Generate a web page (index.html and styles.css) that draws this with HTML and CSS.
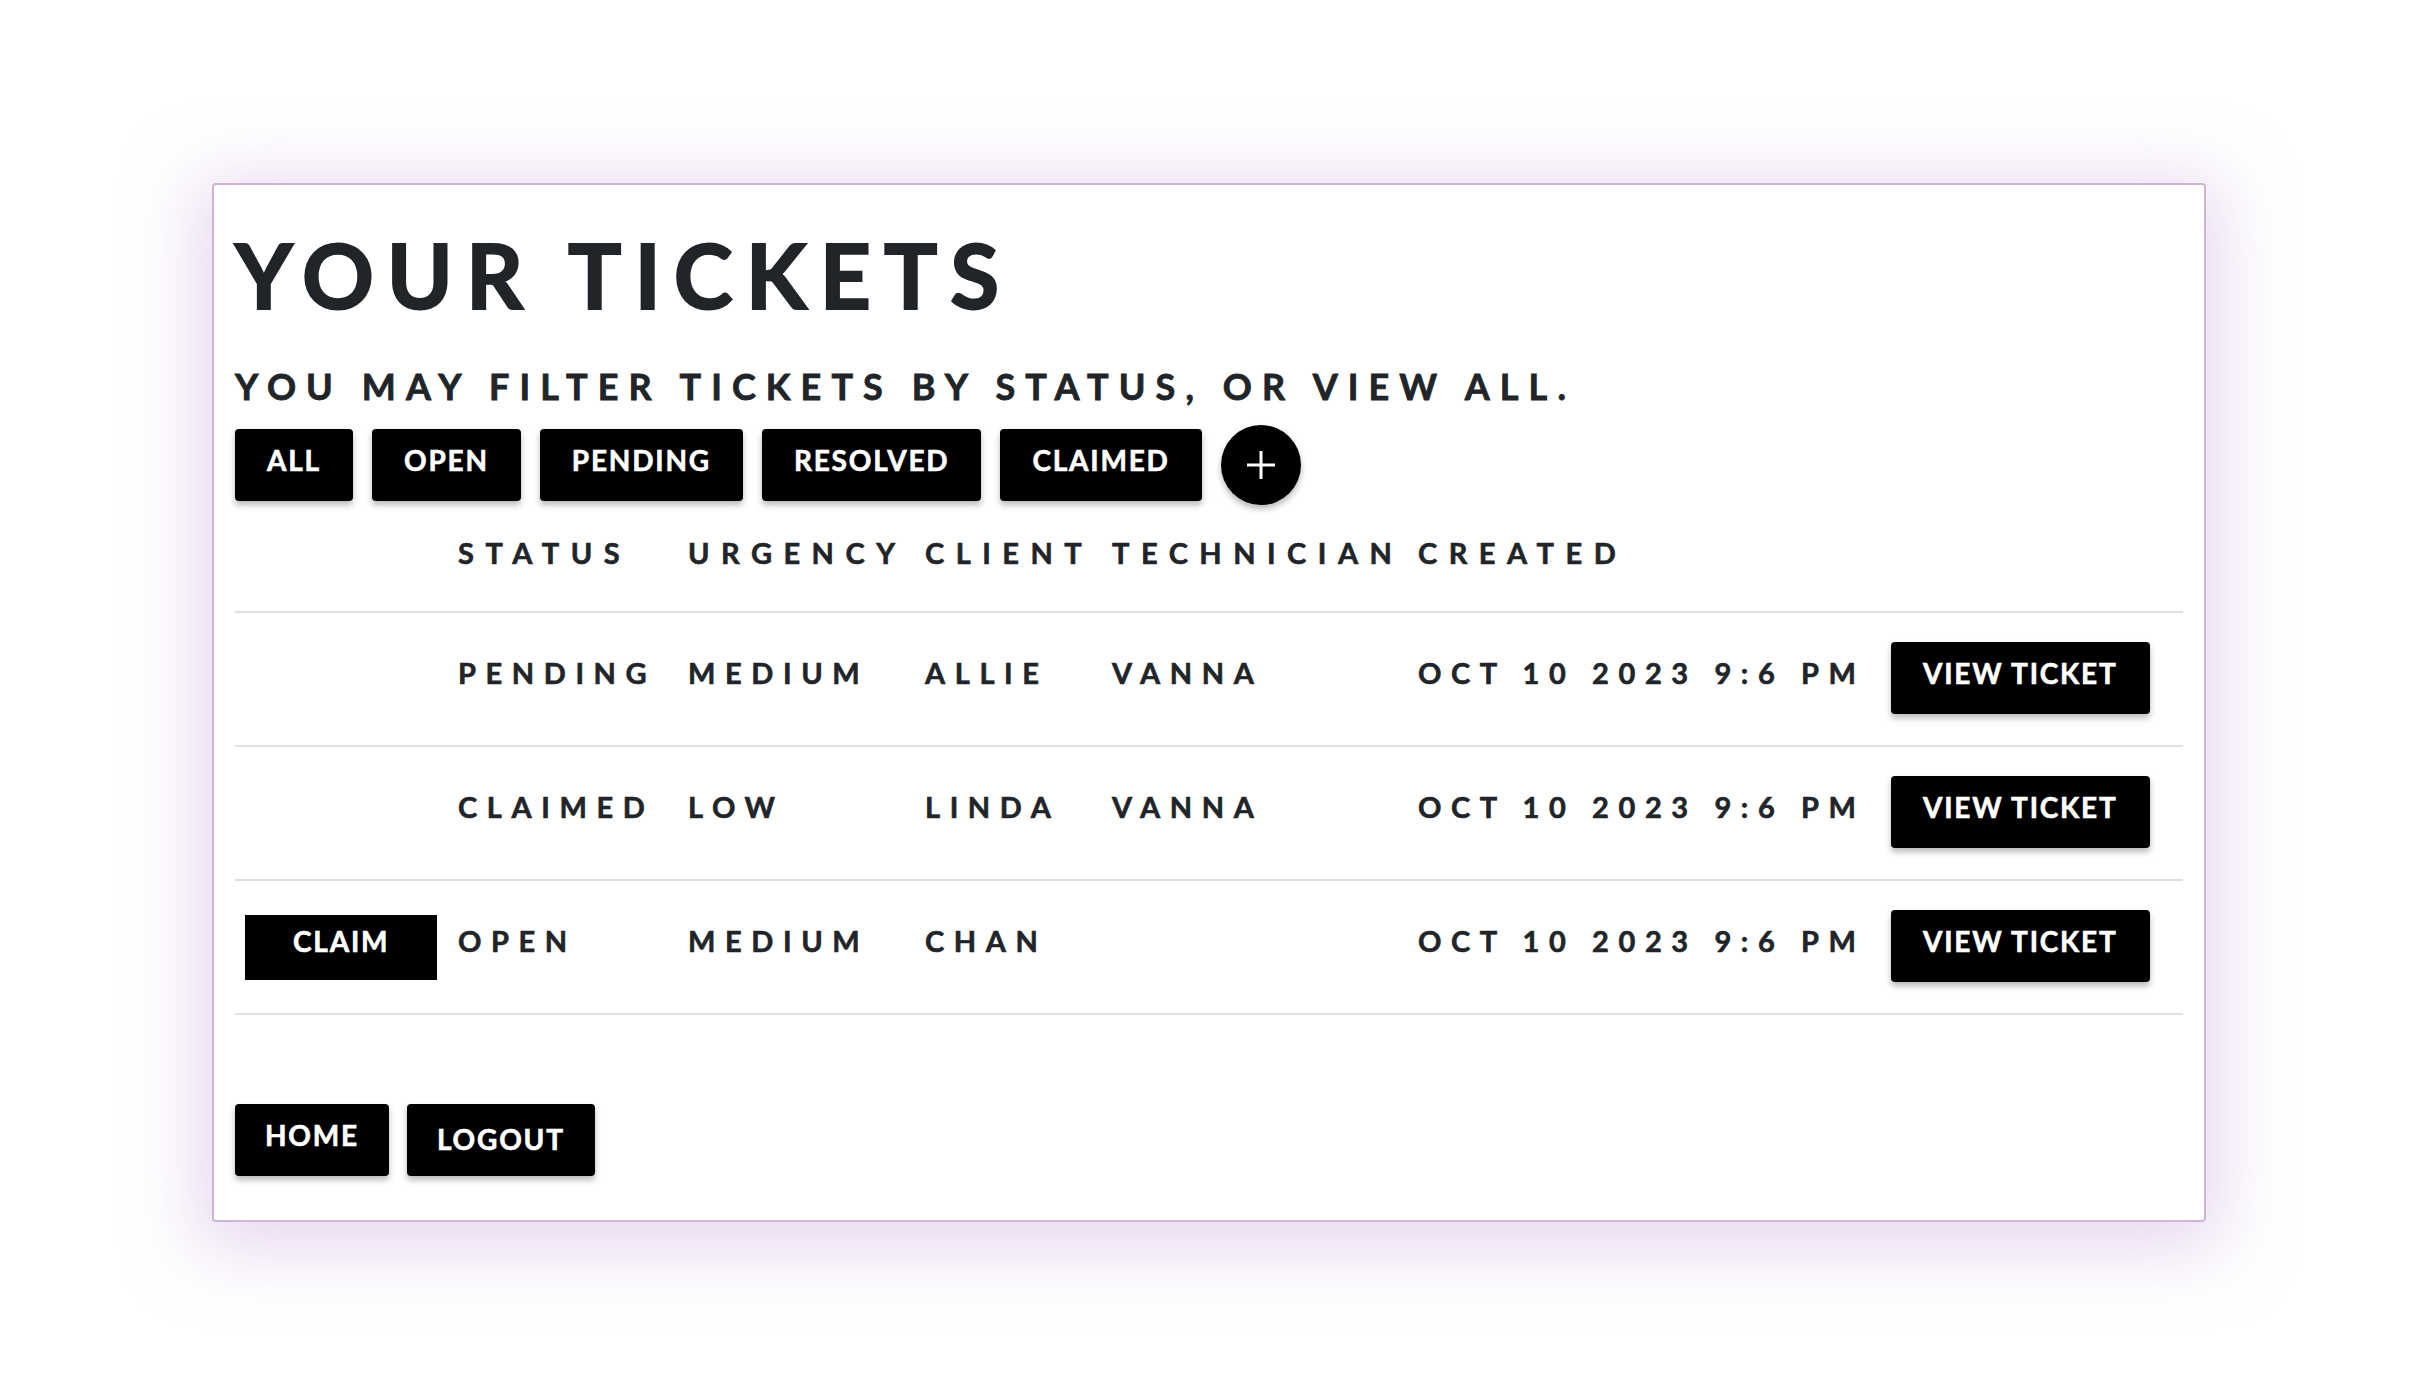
FILE: index.html
```html
<!DOCTYPE html>
<html lang="en">
<head>
<meta charset="utf-8">
<title>Your Tickets</title>
<link rel="stylesheet" href="styles.css">
</head>
<body>
<div class="card">
  <h1 class="title">YOUR TICKETS</h1>
  <h2 class="subtitle">YOU MAY FILTER TICKETS BY STATUS, OR VIEW ALL.</h2>
  <div class="filters">
    <button class="btn">ALL</button>
    <button class="btn">OPEN</button>
    <button class="btn">PENDING</button>
    <button class="btn">RESOLVED</button>
    <button class="btn">CLAIMED</button>
    <button class="btn-add" aria-label="New ticket">
      <svg width="30" height="30" viewBox="0 0 30 30"><path d="M15 1v28M1 15h28" stroke="#fff" stroke-width="3" fill="none"/></svg>
    </button>
  </div>
  <div class="table">
    <div class="row head">
      <div class="cell"></div>
      <div class="cell">STATUS</div>
      <div class="cell">URGENCY</div>
      <div class="cell">CLIENT</div>
      <div class="cell">TECHNICIAN</div>
      <div class="cell">CREATED</div>
      <div class="cell"></div>
    </div>
    <div class="row">
      <div class="cell"></div>
      <div class="cell">PENDING</div>
      <div class="cell">MEDIUM</div>
      <div class="cell">ALLIE</div>
      <div class="cell">VANNA</div>
      <div class="cell">OCT 10 2023 9:6 PM</div>
      <div class="cell"><button class="btn">VIEW TICKET</button></div>
    </div>
    <div class="row">
      <div class="cell"></div>
      <div class="cell">CLAIMED</div>
      <div class="cell">LOW</div>
      <div class="cell">LINDA</div>
      <div class="cell">VANNA</div>
      <div class="cell">OCT 10 2023 9:6 PM</div>
      <div class="cell"><button class="btn">VIEW TICKET</button></div>
    </div>
    <div class="row">
      <div class="cell"><button class="btn-claim">CLAIM</button></div>
      <div class="cell">OPEN</div>
      <div class="cell">MEDIUM</div>
      <div class="cell">CHAN</div>
      <div class="cell"></div>
      <div class="cell">OCT 10 2023 9:6 PM</div>
      <div class="cell"><button class="btn">VIEW TICKET</button></div>
    </div>
  </div>
  <div class="nav">
    <button class="btn">HOME</button>
    <button class="btn logout">LOGOUT</button>
  </div>
</div>
</body>
</html>
```

FILE: styles.css
```css
html, body {
  margin: 0;
  padding: 0;
  background: #ffffff;
}

body {
  font-family: Lato, "Liberation Sans", sans-serif;
  color: #212529;
  min-height: 1383px;
  padding-top: 1px;
  box-sizing: border-box;
}

.card {
  box-sizing: border-box;
  width: 1994px;
  margin: 182px 0 160px 212px;
  padding: 45px 21px 44px;
  border: 2px solid #cdb5d5;
  border-radius: 4px;
  background: #ffffff;
  box-shadow: 0 12px 70px 14px rgba(210, 175, 228, 0.5);
}

.title {
  margin: 0;
  font-size: 89px;
  line-height: 1;
  font-weight: 700;
  letter-spacing: 13px;
  -webkit-text-stroke: 2px #212529;
}

.subtitle {
  margin: 49px 0 0;
  font-size: 36px;
  line-height: 1;
  font-weight: 700;
  letter-spacing: 10.1px;
  -webkit-text-stroke: 0.8px #212529;
}

.filters {
  display: flex;
  align-items: center;
  gap: 19px;
  margin-top: 21px;
}

.btn {
  box-sizing: border-box;
  height: 72px;
  padding: 17px 32px 27px;
  border: 0;
  border-radius: 4px;
  background: #000;
  color: #fff;
  font-family: Lato, "Liberation Sans", sans-serif;
  font-weight: 700;
  font-size: 28px;
  line-height: 28px;
  letter-spacing: 1.8px;
  -webkit-text-stroke: 0.6px #fff;
  box-shadow: 0 4px 6px rgba(0, 0, 0, 0.28);
  cursor: pointer;
  white-space: nowrap;
}

.nav .btn {
  padding-left: 30px;
  padding-right: 30px;
}

.nav .btn.logout {
  padding-top: 21px;
  padding-bottom: 23px;
}

.btn-add {
  width: 80px;
  height: 80px;
  padding: 0;
  border: 0;
  border-radius: 50%;
  background: #000;
  display: flex;
  align-items: center;
  justify-content: center;
  box-shadow: 0 4px 6px rgba(0, 0, 0, 0.28);
  cursor: pointer;
}

.btn-add svg {
  display: block;
}

.btn-claim {
  box-sizing: border-box;
  height: 65px;
  margin-left: 10px;
  padding: 12px 48px 25px;
  border: 0;
  background: #000;
  color: #fff;
  font-family: Lato, "Liberation Sans", sans-serif;
  font-weight: 700;
  font-size: 28px;
  line-height: 28px;
  letter-spacing: 1.8px;
  -webkit-text-stroke: 0.6px #fff;
  cursor: pointer;
}

.table {
  display: flex;
  flex-direction: column;
}

.row {
  display: grid;
  grid-template-columns: 223px 230px 237px 187px 306px 473px 292px;
  align-items: baseline;
  padding: 29px 0 31px;
  border-bottom: 2px solid #e0e0e0;
  font-size: 29px;
  line-height: 1;
  font-weight: 700;
  letter-spacing: 9.6px;
  -webkit-text-stroke: 0.6px #212529;
  white-space: nowrap;
}

.row.head {
  padding: 33px 0 44px;
  letter-spacing: 11.5px;
}

.nav {
  display: flex;
  gap: 18px;
  margin-top: 89px;
}
```
